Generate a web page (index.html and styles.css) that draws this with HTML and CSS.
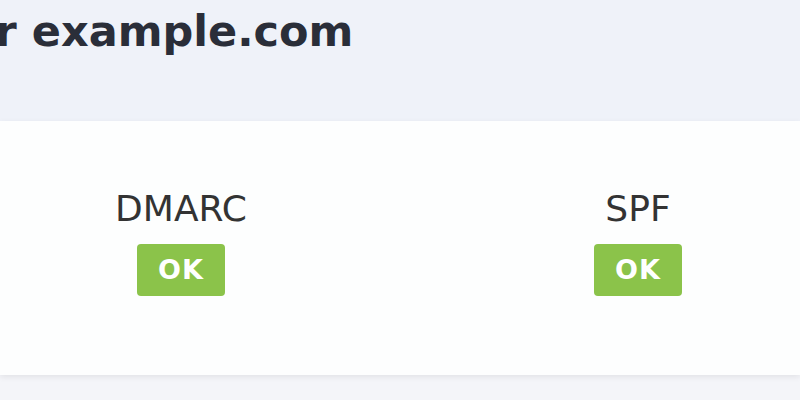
FILE: index.html
```html
<!DOCTYPE html>
<html lang="en">
<head>
  <meta charset="UTF-8" />
  <meta name="viewport" content="width=device-width, initial-scale=1.0" />
  <title>Report for example.com</title>
  <link rel="stylesheet" href="styles.css">
</head>
<body>
  <div class="page">
    <h1 class="title">Report for <strong>example.com</strong></h1>

    <div class="panel">
      <div class="check">
        <div class="check-name">DMARC</div>
        <span class="badge">OK</span>
      </div>
      <div class="check">
        <div class="check-name">SPF</div>
        <span class="badge">OK</span>
      </div>
    </div>
  </div>
</body>
</html>
```

FILE: styles.css
```css
body {
  margin: 0;
  font-family: 'DejaVu Sans', sans-serif;
  background: #f4f5f9;
  color: #333;
  overflow: hidden;
}
.page {
  height: 400px;
  background: linear-gradient(to bottom, #eff2f9 0, #eff2f9 121px, #f4f5f9 121px);
}
.title {
  margin: 0 0 0 -232px;
  padding-top: 6px;
  height: 113px;
  box-sizing: border-box;
  font-size: 43px;
  font-weight: bold;
  color: #2a2e39;
  white-space: nowrap;
}
.panel {
  display: flex;
  gap: 257px;
  height: 254px;
  padding-left: 81px;
  box-sizing: border-box;
  background: #fdfefe;
  box-shadow: 0 2px 6px rgba(0, 0, 0, 0.08);
  margin-top: 8px;
}
.check {
  width: 200px;
  padding-top: 67px;
  display: flex;
  flex-direction: column;
  align-items: center;
}
.check-name {
  font-size: 36px;
  color: #333;
  line-height: 42px;
}
.badge {
  margin-top: 14px;
  width: 88px;
  height: 52px;
  line-height: 52px;
  text-align: center;
  background: #8bc34a;
  color: #fff;
  font-weight: bold;
  font-size: 27px;
  letter-spacing: 1px;
  border-radius: 4px;
}
```
